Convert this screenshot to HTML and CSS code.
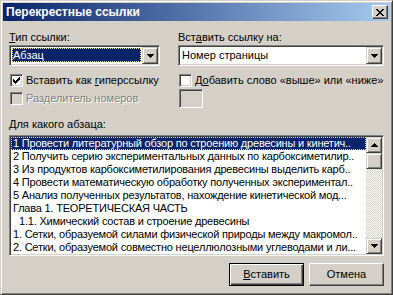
FILE: index.html
```html
<!DOCTYPE html>
<html lang="ru">
<head>
    <meta charset="UTF-8">
    <title>Перекрестные ссылки</title>
    <link rel="stylesheet" href="styles.css">
</head>
<body>
    <div class="window">
        <div class="titlebar">
            <span class="title">Перекрестные ссылки</span>
            <span class="close-btn">
                <svg width="8" height="7" viewBox="0 0 8 7" shape-rendering="crispEdges">
                    <path d="M0 0h2v1h-2zM6 0h2v1h-2zM1 1h2v1h-2zM5 1h2v1h-2zM2 2h4v1h-4zM3 3h2v1h-2zM2 4h4v1h-4zM1 5h2v1h-2zM5 5h2v1h-2zM0 6h2v1h-2zM6 6h2v1h-2z" fill="#000"/>
                </svg>
            </span>
        </div>

        <div class="content">
            <div class="top-grid">
                <div class="col">
                    <div class="label"><u>Т</u>ип ссылки:</div>
                    <div class="combo">
                        <span class="combo-value selected">Абзац</span>
                        <span class="drop-btn">
                            <svg width="7" height="4" viewBox="0 0 7 4" shape-rendering="crispEdges"><path d="M0 0h7v1h-7zM1 1h5v1h-5zM2 2h3v1h-3zM3 3h1v1h-1z" fill="#000"/></svg>
                        </span>
                    </div>
                    <div class="check-row">
                        <span class="checkbox">
                            <svg width="7" height="7" viewBox="0 0 7 7" shape-rendering="crispEdges"><path d="M6 0h1v1h-1zM5 1h2v1h-2zM0 2h1v1h-1zM4 2h3v1h-3zM0 3h2v1h-2zM3 3h3v1h-3zM0 4h5v1h-5zM1 5h3v1h-3zM2 6h1v1h-1z" fill="#000"/></svg>
                        </span>
                        <span>Вставить как <u>г</u>иперссылку</span>
                    </div>
                    <div class="check-row disabled small-gap">
                        <span class="checkbox"></span>
                        <span>Разделитель номеров</span>
                    </div>
                </div>

                <div class="col">
                    <div class="label">Вст<u>а</u>вить ссылку на:</div>
                    <div class="combo">
                        <span class="combo-value">Номер страницы</span>
                        <span class="drop-btn">
                            <svg width="7" height="4" viewBox="0 0 7 4" shape-rendering="crispEdges"><path d="M0 0h7v1h-7zM1 1h5v1h-5zM2 2h3v1h-3zM3 3h1v1h-1z" fill="#000"/></svg>
                        </span>
                    </div>
                    <div class="check-row">
                        <span class="checkbox"></span>
                        <span>Д<u>о</u>бавить слово «выше» или «ниже»</span>
                    </div>
                    <div class="small-edit"></div>
                </div>
            </div>

            <div class="label list-label"><u>Д</u>ля какого абзаца:</div>
            <div class="listbox">
                <ul class="items">
                    <li class="selected">1 Провести литературный обзор по строению древесины и кинетич..</li>
                    <li>2 Получить серию экспериментальных данных по карбоксиметилир..</li>
                    <li>3 Из продуктов карбоксиметилирования древесины выделить карб..</li>
                    <li>4 Провести математическую обработку полученных экспериментал..</li>
                    <li>5 Анализ полученных результатов, нахождение кинетической мод...</li>
                    <li>Глава 1. ТЕОРЕТИЧЕСКАЯ ЧАСТЬ</li>
                    <li class="indent">1.1. Химический состав и строение древесины</li>
                    <li>1. Сетки, образуемой силами физической природы между макромол..</li>
                    <li>2. Сетки, образуемой совместно нецеллюлозными углеводами и ли...</li>
                </ul>
                <div class="scrollbar">
                    <span class="scroll-btn">
                        <svg width="7" height="4" viewBox="0 0 7 4" shape-rendering="crispEdges"><path d="M3 0h1v1h-1zM2 1h3v1h-3zM1 2h5v1h-5zM0 3h7v1h-7z" fill="#000"/></svg>
                    </span>
                    <span class="scroll-thumb"></span>
                    <span class="scroll-track"></span>
                    <span class="scroll-btn">
                        <svg width="7" height="4" viewBox="0 0 7 4" shape-rendering="crispEdges"><path d="M0 0h7v1h-7zM1 1h5v1h-5zM2 2h3v1h-3zM3 3h1v1h-1z" fill="#000"/></svg>
                    </span>
                </div>
            </div>

            <div class="buttons">
                <button class="btn default"><span><u>В</u>ставить</span></button>
                <button class="btn">Отмена</button>
            </div>
        </div>
    </div>
</body>
</html>
```

FILE: styles.css
```css
* {
    margin: 0;
    padding: 0;
    box-sizing: border-box;
}

body {
    font-family: 'Liberation Sans', Arial, sans-serif;
    font-size: 11px;
    line-height: 13px;
    color: #000;
    background: #d4d0c8;
}

u {
    text-decoration: underline;
    text-underline-offset: 1px;
}

.window {
    width: 393px;
    height: 295px;
    background: #d4d0c8;
    border: 1px solid;
    border-color: #d4d0c8 #404040 #404040 #d4d0c8;
    box-shadow: inset 1px 1px #fff, inset -1px -1px #808080;
    padding: 2px;
}

/* title bar */
.titlebar {
    height: 18px;
    display: flex;
    align-items: center;
    justify-content: space-between;
    background: linear-gradient(to right, #0a246a, #a6caf0);
    padding: 0 2px 0 3px;
}

.title {
    color: #fff;
    font-size: 12px;
    font-weight: bold;
}

.close-btn {
    width: 16px;
    height: 14px;
    display: flex;
    align-items: center;
    justify-content: center;
    background: #d4d0c8;
    border: 1px solid;
    border-color: #fff #404040 #404040 #fff;
    box-shadow: inset -1px -1px #808080;
}

/* body */
.content {
    padding: 10px 6px 0;
}

.top-grid {
    display: grid;
    grid-template-columns: 151px 206px;
    column-gap: 18px;
}

.label {
    height: 13px;
    margin-bottom: 1px;
    white-space: nowrap;
}

.combo {
    height: 21px;
    display: flex;
    background: #fff;
    border: 1px solid;
    border-color: #808080 #fff #fff #808080;
    box-shadow: inset 1px 1px #404040, inset -1px -1px #d4d0c8;
    padding: 1px;
}

.combo-value {
    flex: 1;
    margin: 1px 1px 2px;
    padding-left: 1px;
    line-height: 14px;
    white-space: nowrap;
}

.combo-value.selected {
    background: #0a246a;
    color: #fff;
    outline: 1px dotted #e8dca0;
    outline-offset: -1px;
}

.drop-btn,
.scroll-btn {
    width: 16px;
    display: flex;
    align-items: center;
    justify-content: center;
    background: #d4d0c8;
    border: 1px solid;
    border-color: #d4d0c8 #404040 #404040 #d4d0c8;
    box-shadow: inset 1px 1px #fff, inset -1px -1px #808080;
}

.check-row {
    display: flex;
    align-items: center;
    gap: 3px;
    height: 13px;
    margin-top: 8px;
    white-space: nowrap;
}

.check-row.small-gap {
    margin-top: 5px;
}

.checkbox {
    width: 13px;
    height: 13px;
    margin-left: 1px;
    flex: none;
    display: flex;
    align-items: center;
    justify-content: center;
    background: #fff;
    border: 1px solid;
    border-color: #808080 #fff #fff #808080;
    box-shadow: inset 1px 1px #404040, inset -1px -1px #d4d0c8;
}

.disabled {
    color: #808080;
    text-shadow: 1px 1px #fff;
}

.disabled .checkbox {
    background: #d4d0c8;
}

.small-edit {
    width: 24px;
    height: 19px;
    margin: 2px 0 0 1px;
    background: #d4d0c8;
    border: 1px solid;
    border-color: #808080 #fff #fff #808080;
    box-shadow: inset 1px 1px #404040, inset -1px -1px #d4d0c8;
}

.list-label {
    margin-top: 10px;
    margin-bottom: 4px;
}

/* list box */
.listbox {
    height: 121px;
    display: flex;
    background: #fff;
    border: 1px solid;
    border-color: #808080 #fff #fff #808080;
    box-shadow: inset 1px 1px #404040, inset -1px -1px #d4d0c8;
    padding: 1px;
}

.items {
    flex: 1;
    min-width: 0;
    list-style: none;
}

.items li {
    height: 13px;
    padding-left: 2px;
    letter-spacing: -0.2px;
    white-space: nowrap;
    overflow: hidden;
}

.items li.selected {
    background: #0a246a;
    color: #fff;
    outline: 1px dotted #e8dca0;
    outline-offset: -1px;
}

.items li.indent {
    padding-left: 8px;
}

.scrollbar {
    width: 16px;
    display: flex;
    flex-direction: column;
    background: repeating-conic-gradient(#d4d0c8 0 25%, #fff 0 50%) 0 0 / 2px 2px;
}

.scroll-btn {
    height: 16px;
    flex: none;
}

.scroll-thumb {
    height: 16px;
    background: #d4d0c8;
    border: 1px solid;
    border-color: #d4d0c8 #404040 #404040 #d4d0c8;
    box-shadow: inset 1px 1px #fff, inset -1px -1px #808080;
}

.scroll-track {
    flex: 1;
}

/* buttons */
.buttons {
    display: flex;
    justify-content: flex-end;
    gap: 5px;
    margin-top: 7px;
}

.btn {
    width: 75px;
    height: 23px;
    font: inherit;
    color: #000;
    background: #d4d0c8;
    border: 1px solid;
    border-color: #fff #404040 #404040 #fff;
    box-shadow: inset -1px -1px #808080, inset 1px 1px #d4d0c8;
}

.btn.default {
    border: 1px solid #000;
    box-shadow: inset 1px 1px #fff, inset -1px -1px #404040, inset -2px -2px #808080;
}
```
